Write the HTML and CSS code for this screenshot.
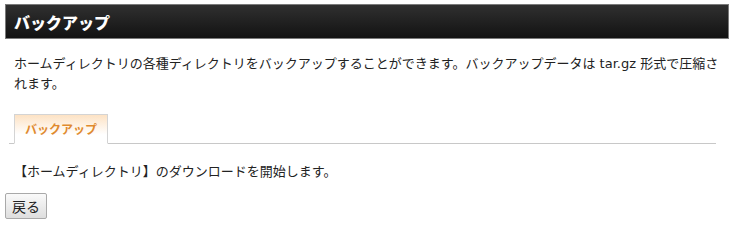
FILE: index.html
```html
<!DOCTYPE html>
<html lang="ja">
<head>
    <meta charset="UTF-8">
    <title>バックアップ</title>
    <link rel="stylesheet" href="styles.css">
</head>
<body>

<div class="page-title">
    <h2>バックアップ</h2>
</div>

<p class="intro">ホームディレクトリの各種ディレクトリをバックアップすることができます。バックアップデータは tar.gz 形式で圧縮されます。</p>

<!-- tabs -->
<div class="tabs">
    <span class="tab active">バックアップ</span>
</div>

<p class="message">【ホームディレクトリ】のダウンロードを開始します。</p>

<form class="actions">
    <button type="button" class="btn-back">戻る</button>
</form>

</body>
</html>
```

FILE: styles.css
```css
body {
    margin: 4px 9px 0 5px;
    font-family: "DejaVu Sans", "Noto Sans CJK JP", sans-serif;
    font-size: 13px;
    color: #222;
    background: #fff;
}
.page-title {
    height: 33px;
    border: 1px solid #7a7a7a;
    background: linear-gradient(#303030, #121212);
    display: flex;
    align-items: center;
}
.page-title h2 {
    margin: 0 0 0 8px;
    font-family: "Noto Sans CJK JP", sans-serif;
    font-size: 16px;
    font-weight: 900;
    color: #fff;
}
.intro {
    margin: 15px 0 0;
    padding: 0 8px 0 9px;
    line-height: 20px;
}
.tabs {
    margin: 20px 13px 0 4px;
    border-bottom: 1px solid #c8c8c8;
    display: flex;
    padding-left: 5px;
}
.tab {
    display: block;
    margin-bottom: -1px;
    padding: 0 10px;
    height: 28px;
    line-height: 28px;
    border: 1px solid #d4d4d4;
    border-bottom-color: #fff;
    background: linear-gradient(#fde2c4, #fff 70%);
    font-family: "Noto Sans CJK JP", sans-serif;
    font-size: 12px;
    font-weight: bold;
    color: #e08a2e;
}
.message {
    margin: 18px 0 0;
    padding-left: 9px;
    line-height: 20px;
}
.actions {
    margin: 11px 0 0;
}
.btn-back {
    width: 42px;
    height: 26px;
    padding: 0;
    border: 1px solid #a9a9a9;
    border-radius: 2px;
    background: linear-gradient(#fafafa, #dedede);
    font-family: "Noto Sans CJK JP", sans-serif;
    font-size: 14px;
    color: #222;
}
```
